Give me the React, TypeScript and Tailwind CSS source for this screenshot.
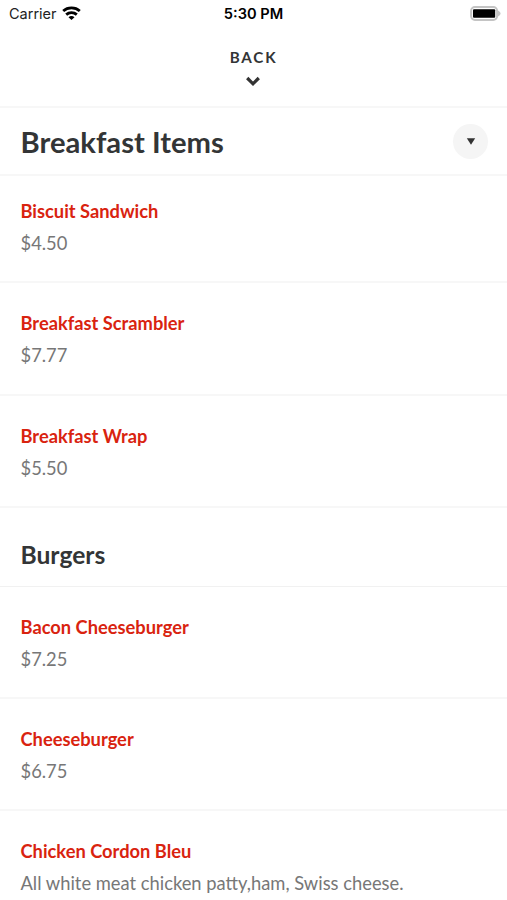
import React from "react";

type Item = { name: string; detail: string };

const breakfast: Item[] = [
  { name: "Biscuit Sandwich", detail: "$4.50" },
  { name: "Breakfast Scrambler", detail: "$7.77" },
  { name: "Breakfast Wrap", detail: "$5.50" },
];

const burgers: Item[] = [
  { name: "Bacon Cheeseburger", detail: "$7.25" },
  { name: "Cheeseburger", detail: "$6.75" },
  { name: "Chicken Cordon Bleu", detail: "All white meat chicken patty,ham, Swiss cheese." },
];

function MenuItem({ name, detail }: Item) {
  return (
    <li className="h-[112.3px] shrink-0 border-b-2 border-[#f7f7f7] px-[20.5px] pt-[26px]">
      <h3 className="text-[18.3px] leading-7 font-bold text-[#d9230f]">{name}</h3>
      <p className="mt-1 text-[18.33px] leading-7 whitespace-nowrap text-[#777]">{detail}</p>
    </li>
  );
}

export default function App() {
  return (
    <div className="flex h-[900px] w-[507px] flex-col overflow-hidden bg-white font-['Lato',sans-serif] text-[#333536]">
      <div className="grid h-7 shrink-0 grid-cols-3 items-center font-['Inter',sans-serif] text-black">
        <div className="flex items-center gap-[5px] pl-[9px] text-[14.5px] text-[#222]">
          <span>Carrier</span>
          <svg className="-mt-[2px]" width="19" height="14" viewBox="0 0 19 14" fill="none" stroke="#000" strokeWidth="2.8">
            <path d="M1.2 5C5.8.9 13.2.9 17.8 5M4.2 8.6c3-2.7 7.6-2.7 10.6 0" />
            <path d="M6.5 11.2c1.7-1.5 4.3-1.5 6 0L9.5 14z" fill="#000" stroke="none" />
          </svg>
        </div>
        <span className="pt-[1px] text-center text-[14.6px] font-semibold">5:30 PM</span>
        <svg className="mr-[6px] -mt-[1px] justify-self-end" width="31" height="15" viewBox="0 0 31 15">
          <rect x="1.1" y="1.1" width="26" height="12.8" rx="3.8" fill="#fff" stroke="#c4c4c4" strokeWidth="2" />
          <rect x="3" y="3.2" width="22.2" height="8.6" rx="1" />
          <path d="M28 4.5c3.4 1.6 3.4 4.4 0 6z" fill="#c4c4c4" />
        </svg>
      </div>
      <header className="flex h-20 shrink-0 flex-col items-center border-b-2 border-[#f7f7f7] pt-[19px]">
        <span className="text-[15.2px] leading-5 font-bold tracking-[1.8px]">BACK</span>
        <svg className="mt-[9px] mr-[1px]" width="14" height="11" viewBox="0 0 14 11" fill="none" stroke="#333" strokeWidth="3.2">
          <path d="m1.2 2 5.8 5.8L12.8 2" />
        </svg>
      </header>
      <div className="flex h-[68px] shrink-0 items-center justify-between border-b-2 border-[#f7f7f7] pr-[19px] pl-[20.5px]">
        <h1 className="pt-[1px] text-[29.2px] leading-9 font-bold">Breakfast Items</h1>
        <button aria-label="Choose category" className="flex size-[35px] items-center justify-center rounded-full bg-[#f5f5f5]">
          <svg width="10" height="7" viewBox="0 0 10 7" fill="#333"><path d="M.8.3h8.4L5 6.7z" /></svg>
        </button>
      </div>
      <ul className="-mt-[4.9px] flex flex-col">
        {breakfast.map((item) => <MenuItem key={item.name} {...item} />)}
      </ul>
      <h2 className="h-[78.7px] shrink-0 border-b border-[#f1f1f1] px-[20.5px] pt-[31px] text-[24.6px] leading-8 font-bold">Burgers</h2>
      <ul className="flex flex-col">
        {burgers.map((item) => <MenuItem key={item.name} {...item} />)}
      </ul>
    </div>
  );
}
